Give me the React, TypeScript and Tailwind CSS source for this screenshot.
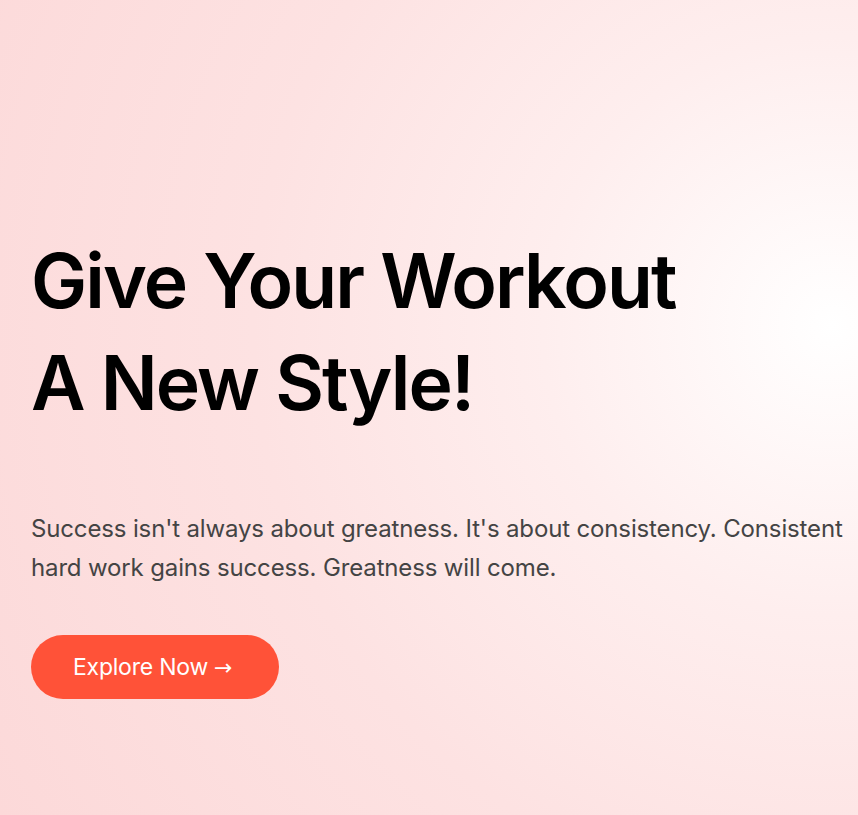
const Hero = () => {
  return (
    <section className="min-h-screen w-full bg-[radial-gradient(circle_at_97%_40%,#ffffff_0%,#feeeee_30%,#fde2e2_60%,#fcd9d9_100%)] font-['Inter','Liberation_Sans',sans-serif]">
      <div className="pl-[31px] pt-[230px]">
        <h1 className="text-[75px] leading-[102px] font-semibold tracking-[-0.025em] text-black">
          Give Your Workout
          <br />
          A New Style!
        </h1>

        <p className="mt-[75px] whitespace-nowrap text-[24px] leading-[39px] text-[#444444] tracking-[-0.006em]">
          Success isn't always about greatness. It's about consistency. Consistent
          <br />
          hard work gains success. Greatness will come.
        </p>

        <button className="mt-[48px] flex h-16 w-[248px] items-center rounded-full bg-[#ff5238] pl-[42px] text-[23px] tracking-[-0.01em] text-white">
          Explore Now
          <span className="ml-[6px] font-['DejaVu_Sans',sans-serif] text-[22px]">→</span>
        </button>
      </div>
    </section>
  );
};

export default function App() {
  return <Hero />;
}
